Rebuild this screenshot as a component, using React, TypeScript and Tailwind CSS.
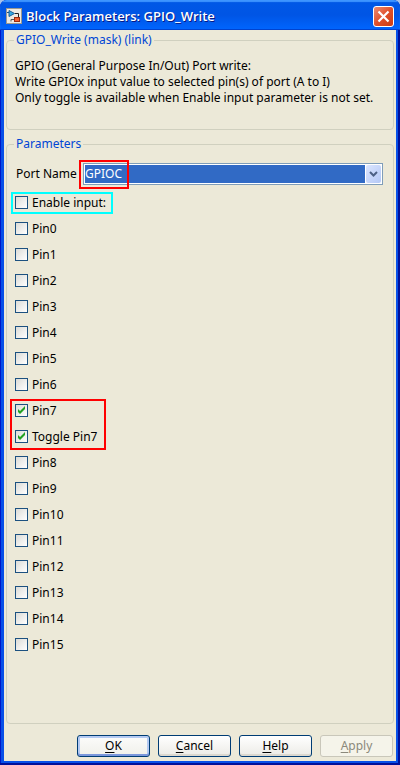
import { useState, type ReactNode } from "react";

const PORTS = ["GPIOA", "GPIOB", "GPIOC", "GPIOD", "GPIOE", "GPIOF", "GPIOG", "GPIOH", "GPIOI"];

function BlockIcon() {
  return (
    <svg width="16" height="16" viewBox="0 0 16 16" aria-hidden="true" className="shrink-0">
      <rect width="16" height="16" fill="#9a9890" />
      <rect x="1" y="1" width="14" height="14" fill="#eeeae2" />
      <path d="M9 5.500H12.500V9" stroke="#222" fill="none" />
      <path d="M1 4.500H3" stroke="#1c4f80" />
      <path d="M3 2.500V8.500L8.500 5.500Z" fill="#35a8e0" stroke="#1c5f98" />
      <path d="M5 13.500V11.500H8" stroke="#555" fill="none" />
      <rect x="8.500" y="9.500" width="5" height="4" fill="#f06030" stroke="#9a2c10" />
    </svg>
  );
}

function CloseButton() {
  return (
    <button
      type="button"
      aria-label="Close"
      className="flex h-[21px] w-[21px] shrink-0 items-center justify-center rounded-[3px] border border-white bg-linear-to-br from-[#ec8a70] via-[#e0502a] to-[#cc3c10]"
    >
      <svg width="13" height="13" viewBox="0 0 13 13" aria-hidden="true">
        <path d="M1.500 1.500L11.500 11.500M11.500 1.500L1.500 11.500" stroke="#fff" strokeWidth="2.200" />
      </svg>
    </button>
  );
}

function Group({ title, className, children }: { title: string; className: string; children: ReactNode }) {
  return (
    <fieldset className={`min-w-0 rounded-[4px] border border-[#d0d0bf] px-2 ${className}`}>
      <legend className="-ml-px px-0.5 leading-4 text-[#0046d5]">{title}</legend>
      {children}
    </fieldset>
  );
}

function Check({ label, initial = false }: { label: string; initial?: boolean }) {
  const [on, setOn] = useState(initial);
  return (
    <label className="flex h-[26px] w-fit items-center gap-1">
      <span className="relative block h-[13px] w-[13px]">
        <input
          type="checkbox"
          checked={on}
          onChange={() => setOn(!on)}
          className="block h-[13px] w-[13px] appearance-none border border-solid border-[#1c5180] bg-linear-to-br from-[#dcdcd7] to-white"
        />
        {on && (
          <svg width="13" height="13" viewBox="0 0 13 13" aria-hidden="true" className="pointer-events-none absolute inset-0">
            <path d="M3 5V8L5 10L10 5V2L5 7Z" fill="#21a121" />
          </svg>
        )}
      </span>
      <span className="pt-0.5">{label}</span>
    </label>
  );
}

function Highlight({ className }: { className: string }) {
  return <div aria-hidden="true" className={`pointer-events-none absolute border-2 ${className}`} />;
}

function DialogButton({ hot, rest, kind = "normal" }: { hot: string; rest: string; kind?: "normal" | "default" | "disabled" }) {
  const look = {
    normal: "border-[#003c74] bg-linear-to-b from-white to-[#ecebe6] shadow-[inset_0_-2px_0_#dcd8cf]",
    default: "border-[#003c74] bg-linear-to-b from-[#fcfcfb] to-[#f0f0ea] shadow-[inset_0_-2px_0_#7c98dc,inset_0_0_0_2px_#b4caf2]",
    disabled: "border-[#c9c7ba] bg-[#f5f4ea] text-[#8b897b]",
  }[kind];
  return (
    <button type="button" disabled={kind === "disabled"} className={`h-[22px] w-[73px] rounded-[3px] border text-center leading-5 ${look}`}>
      <span className="underline underline-offset-2">{hot}</span>
      {rest}
    </button>
  );
}

export default function App() {
  const [port, setPort] = useState("GPIOC");
  return (
    <div className="bg-[#a5c2ea]">
      <main className="flex min-h-screen flex-col overflow-hidden rounded-t-[7px] bg-[#0850e8] font-['Noto_Sans',sans-serif] text-[12px] leading-4 text-black shadow-[inset_-2px_-2px_0_#00109a,inset_1px_0_0_#0018c8]">
        <header className="flex h-[30px] shrink-0 items-center gap-1 bg-linear-to-b from-[#0058e6] via-[#0055e5] to-[#0066ff] px-1.5 pt-0.5 shadow-[inset_0_2px_1px_#3d95ff,inset_0_-1px_0_#0043cf]">
          <BlockIcon />
          <h1 className="flex-1 font-['Open_Sans',sans-serif] text-[13px] font-semibold text-white [text-shadow:1px_1px_0_#0a1883]">
            Block Parameters: GPIO_Write
          </h1>
          <CloseButton />
        </header>

        <div className="mx-1 mb-1 flex flex-1 flex-col bg-[#ece9d8] px-0.5 pt-0.5 pb-1">
          <Group title="GPIO_Write (mask) (link)" className="h-[98px] shrink-0 pt-2.5">
            <p>GPIO (General Purpose In/Out) Port write:</p>
            <p>Write GPIOx input value to selected pin(s) of port (A to I)</p>
            <p>Only toggle is available when Enable input parameter is not set.</p>
          </Group>

          <Group title="Parameters" className="mt-1.5 flex-1 pt-[11px]">
            <div className="mb-1 flex items-center pr-0.5 pl-px">
              <label htmlFor="port" className="w-[67px] shrink-0">
                Port Name
              </label>
              <div className="relative h-[22px] flex-1 border border-[#7f9db9] bg-white p-px">
                <select
                  id="port"
                  value={port}
                  onChange={(e) => setPort(e.target.value)}
                  className="block h-[18px] w-full appearance-none border-r-[16px] border-white bg-[#316ac5] text-white outline-none"
                >
                  {PORTS.map((p) => (
                    <option key={p}>{p}</option>
                  ))}
                </select>
                <span className="pointer-events-none absolute top-px right-px flex h-[18px] w-[15px] items-center justify-center rounded-[2px] bg-linear-to-br from-[#dbe5fe] to-[#b4c8f6]">
                  <svg width="9" height="6" viewBox="0 0 9 6" aria-hidden="true">
                    <path d="M1 1L4.500 4.500L8 1" stroke="#4d6185" strokeWidth="2" fill="none" />
                  </svg>
                </span>
                <Highlight className="-top-1 -left-[5px] h-[29px] w-[50px] border-[#ff0000]" />
              </div>
            </div>

            <div className="relative w-fit">
              <Check label="Enable input:" />
              <Highlight className="top-[3px] -left-1 h-[22px] w-[102px] border-[#00ffff]" />
            </div>
            {[0, 1, 2, 3, 4, 5, 6].map((n) => (
              <Check key={n} label={`Pin${n}`} />
            ))}
            <div className="relative w-fit">
              <Check label="Pin7" initial />
              <Check label="Toggle Pin7" initial />
              <Highlight className="top-0.5 -left-[5px] h-[51px] w-[96px] border-[#ff0000]" />
            </div>
            {[8, 9, 10, 11, 12, 13, 14, 15].map((n) => (
              <Check key={n} label={`Pin${n}`} />
            ))}
          </Group>

          <div className="mt-[11px] flex shrink-0 justify-end gap-2 pr-px">
            <DialogButton hot="O" rest="K" kind="default" />
            <DialogButton hot="C" rest="ancel" />
            <DialogButton hot="H" rest="elp" />
            <DialogButton hot="A" rest="pply" kind="disabled" />
          </div>
        </div>
      </main>
    </div>
  );
}
